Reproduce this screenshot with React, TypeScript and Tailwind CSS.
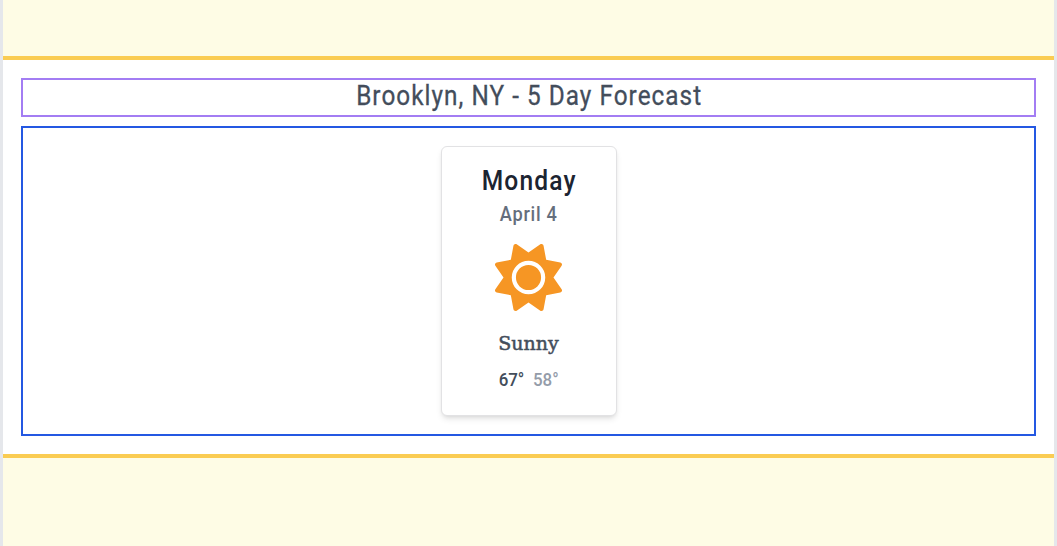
import { FaSun } from "react-icons/fa6";

export default function App() {
  return (
    <div className="h-[546px] overflow-hidden border-x-[3px] border-[#e5e7eb] bg-[#fefce5] pt-14">
      <main className="flex h-[402px] flex-col border-y-4 border-[#facc52] bg-white px-[18px] pt-[18px] pb-[18px] font-['Roboto',sans-serif]">
        <h1 className="flex h-[39px] shrink-0 items-center justify-center border-2 border-[#a37df3] pb-[2px] text-[27px] leading-none text-[#434d5b]">
          <span className="inline-block scale-x-[0.9] pl-px tracking-[1.16px] whitespace-nowrap [-webkit-text-stroke:0.3px_#434d5b]">Brooklyn, NY - 5 Day Forecast</span>
        </h1>
        <section className="mt-[9px] flex h-[310px] justify-center border-2 border-[#2458e2] pt-[18px]">
          <article className="flex h-[270px] w-[176px] flex-col items-center rounded-md border border-[#e2e2e4] bg-white pt-[18px] shadow-md">
            <h2 className="text-[27px] leading-8 font-medium text-[#1c2431]">
              <span className="inline-block scale-x-[0.91] pl-px tracking-[1.3px]">Monday</span>
            </h2>
            <p className="mt-[5px] text-[20px] leading-6 font-medium text-[#656e7c]">
              <span className="inline-block scale-x-[0.91] pl-px tracking-[0.8px]">April 4</span>
            </p>
            <FaSun className="mt-[18px] size-[67px] shrink-0 text-[#f69624]" />
            <p className="mt-5 font-['DejaVu_Serif',serif] text-[19px] leading-6 text-[#434d5b]">
              <span className="inline-block [-webkit-text-stroke:0.5px_#434d5b]">Sunny</span>
            </p>
            <p className="mt-[13px] flex gap-[9px] text-[18px] leading-6 font-medium">
              <span className="inline-block origin-right scale-x-[0.94] text-[#434d5b]">67°</span>
              <span className="inline-block origin-left scale-x-[0.94] text-[#949ca9]">58°</span>
            </p>
          </article>
        </section>
      </main>
    </div>
  );
}
